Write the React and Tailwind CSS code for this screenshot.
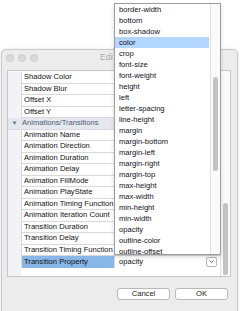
import React from "react";

const names = [
  "Shadow Color",
  "Shadow Blur",
  "Offset X",
  "Offset Y",
  "__group",
  "Animation Name",
  "Animation Direction",
  "Animation Duration",
  "Animation Delay",
  "Animation FillMode",
  "Animation PlayState",
  "Animation Timing Function",
  "Animation Iteration Count",
  "Transition Duration",
  "Transition Delay",
  "Transition Timing Function",
  "__selected",
];

const items = [
  "border-width",
  "bottom",
  "box-shadow",
  "color",
  "crop",
  "font-size",
  "font-weight",
  "height",
  "left",
  "letter-spacing",
  "line-height",
  "margin",
  "margin-bottom",
  "margin-left",
  "margin-right",
  "margin-top",
  "max-height",
  "max-width",
  "min-height",
  "min-width",
  "opacity",
  "outline-color",
  "outline-offset",
];

function Row({ name }) {
  if (name === "__group") {
    return (
      <div className="flex h-[11.5px] bg-[#e5e8ee] border-b border-[#d8dbe0]">
        <div className="w-[13px] flex items-center justify-center text-[6px] text-[#6d7585]">▼</div>
        <div className="flex-1 flex items-center pl-[1px] text-[#4d5b78] whitespace-nowrap">
          Animations/Transitions
        </div>
      </div>
    );
  }
  if (name === "__selected") {
    return (
      <div className="flex h-[11.5px]">
        <div className="w-[13px] bg-[#f1f3f7]" />
        <div className="w-[93px] flex items-center pl-[2px] bg-[#88b6e7] border-l border-[#d9d9d9] text-[#111] whitespace-nowrap overflow-hidden">
          Transition Property
        </div>
        <div className="flex-1 flex items-center justify-between pl-[4px] pr-[3px] border-l border-[#d9d9d9] bg-white">
          <span className="text-[#111]">opacity</span>
          <div className="w-[11px] h-[10px] rounded-[2px] border border-[#b8b8b8] bg-white flex items-center justify-center">
            <svg width="5" height="3" viewBox="0 0 5 3">
              <path d="M0.5 0.5 L2.5 2.5 L4.5 0.5" fill="none" stroke="#555" strokeWidth="0.9" />
            </svg>
          </div>
        </div>
      </div>
    );
  }
  return (
    <div className="flex h-[11.5px]">
      <div className="w-[13px] bg-[#f1f3f7]" />
      <div className="w-[93px] flex items-center pl-[2px] border-l border-b border-[#d9d9d9] text-[#111] whitespace-nowrap overflow-hidden">
        {name}
      </div>
      <div className="flex-1 border-l border-b border-[#d9d9d9] bg-white" />
    </div>
  );
}

export default function App() {
  return (
    <div
      className="relative w-[240px] h-[311px] overflow-hidden bg-white text-[7.6px] leading-none"
      style={{ fontFamily: '"Liberation Sans", Arial, sans-serif' }}
    >
      {/* Dialog window */}
      <div className="absolute left-[1px] top-[49px] w-[237px] h-[280px] rounded-t-[5px] border border-[#c9c9c9] bg-[#ececec] shadow-[0_0_3px_rgba(0,0,0,0.12)] flex flex-col">
        <div className="h-[15px] flex items-center pl-[4px]">
          <div className="flex gap-[4px]">
            <div className="w-[8px] h-[8px] rounded-full bg-[#dadada] border border-[#cbcbcb]" />
            <div className="w-[8px] h-[8px] rounded-full bg-[#dadada] border border-[#cbcbcb]" />
            <div className="w-[8px] h-[8px] rounded-full bg-[#dadada] border border-[#cbcbcb]" />
          </div>
          <div className="ml-[62px] w-[13px] overflow-hidden">
            <span className="text-[8.5px] text-[#ababab] whitespace-nowrap">Edit</span>
          </div>
        </div>

        <div className="mt-[5px] ml-[5px] mr-[6px] h-[207px] border border-[#c6c6c6] bg-white flex">
          <div className="flex-1 flex flex-col pt-[1px]">
            {names.map((n, i) => (
              <Row key={i} name={n} />
            ))}
            <div className="flex flex-1">
              <div className="w-[13px] bg-[#f1f3f7]" />
              <div className="flex-1 bg-white" />
            </div>
          </div>
          <div className="w-[10px] border-l border-[#e3e3e3] bg-[#fafafa] flex flex-col justify-end pb-[1px] pl-[2px]">
            <div className="w-[5px] h-[72px] rounded-full bg-[#c3c3c3]" />
          </div>
        </div>

        <div className="mt-[11px] flex justify-end gap-[5px] pr-[9px]">
          <div className="w-[53px] h-[12px] rounded-[3px] border border-[#b9b9b9] bg-white flex items-center justify-center text-[#222]">
            Cancel
          </div>
          <div className="w-[53px] h-[12px] rounded-[3px] border border-[#b9b9b9] bg-white flex items-center justify-center text-[#222]">
            OK
          </div>
        </div>
      </div>

      {/* Popup list */}
      <div className="absolute left-[114px] top-[3px] w-[107px] h-[252px] bg-white border border-[#9d9d9d] shadow-[0_2px_4px_rgba(0,0,0,0.15)] flex overflow-hidden">
        <div className="flex-1 flex flex-col">
          {items.map((it) => (
            <div
              key={it}
              className={
                "h-[11px] shrink-0 flex items-center pl-[4px] whitespace-nowrap text-[#111118] " +
                (it === "color" ? "bg-[#b3d6fe] mr-[1px]" : "")
              }
            >
              {it}
            </div>
          ))}
        </div>
        <div className="w-[10px] border-l border-[#e2e2e2] bg-[#fafafa] pt-[73px] pl-[2px]">
          <div className="w-[5px] h-[94px] rounded-full bg-[#c3c3c3]" />
        </div>
      </div>
    </div>
  );
}
